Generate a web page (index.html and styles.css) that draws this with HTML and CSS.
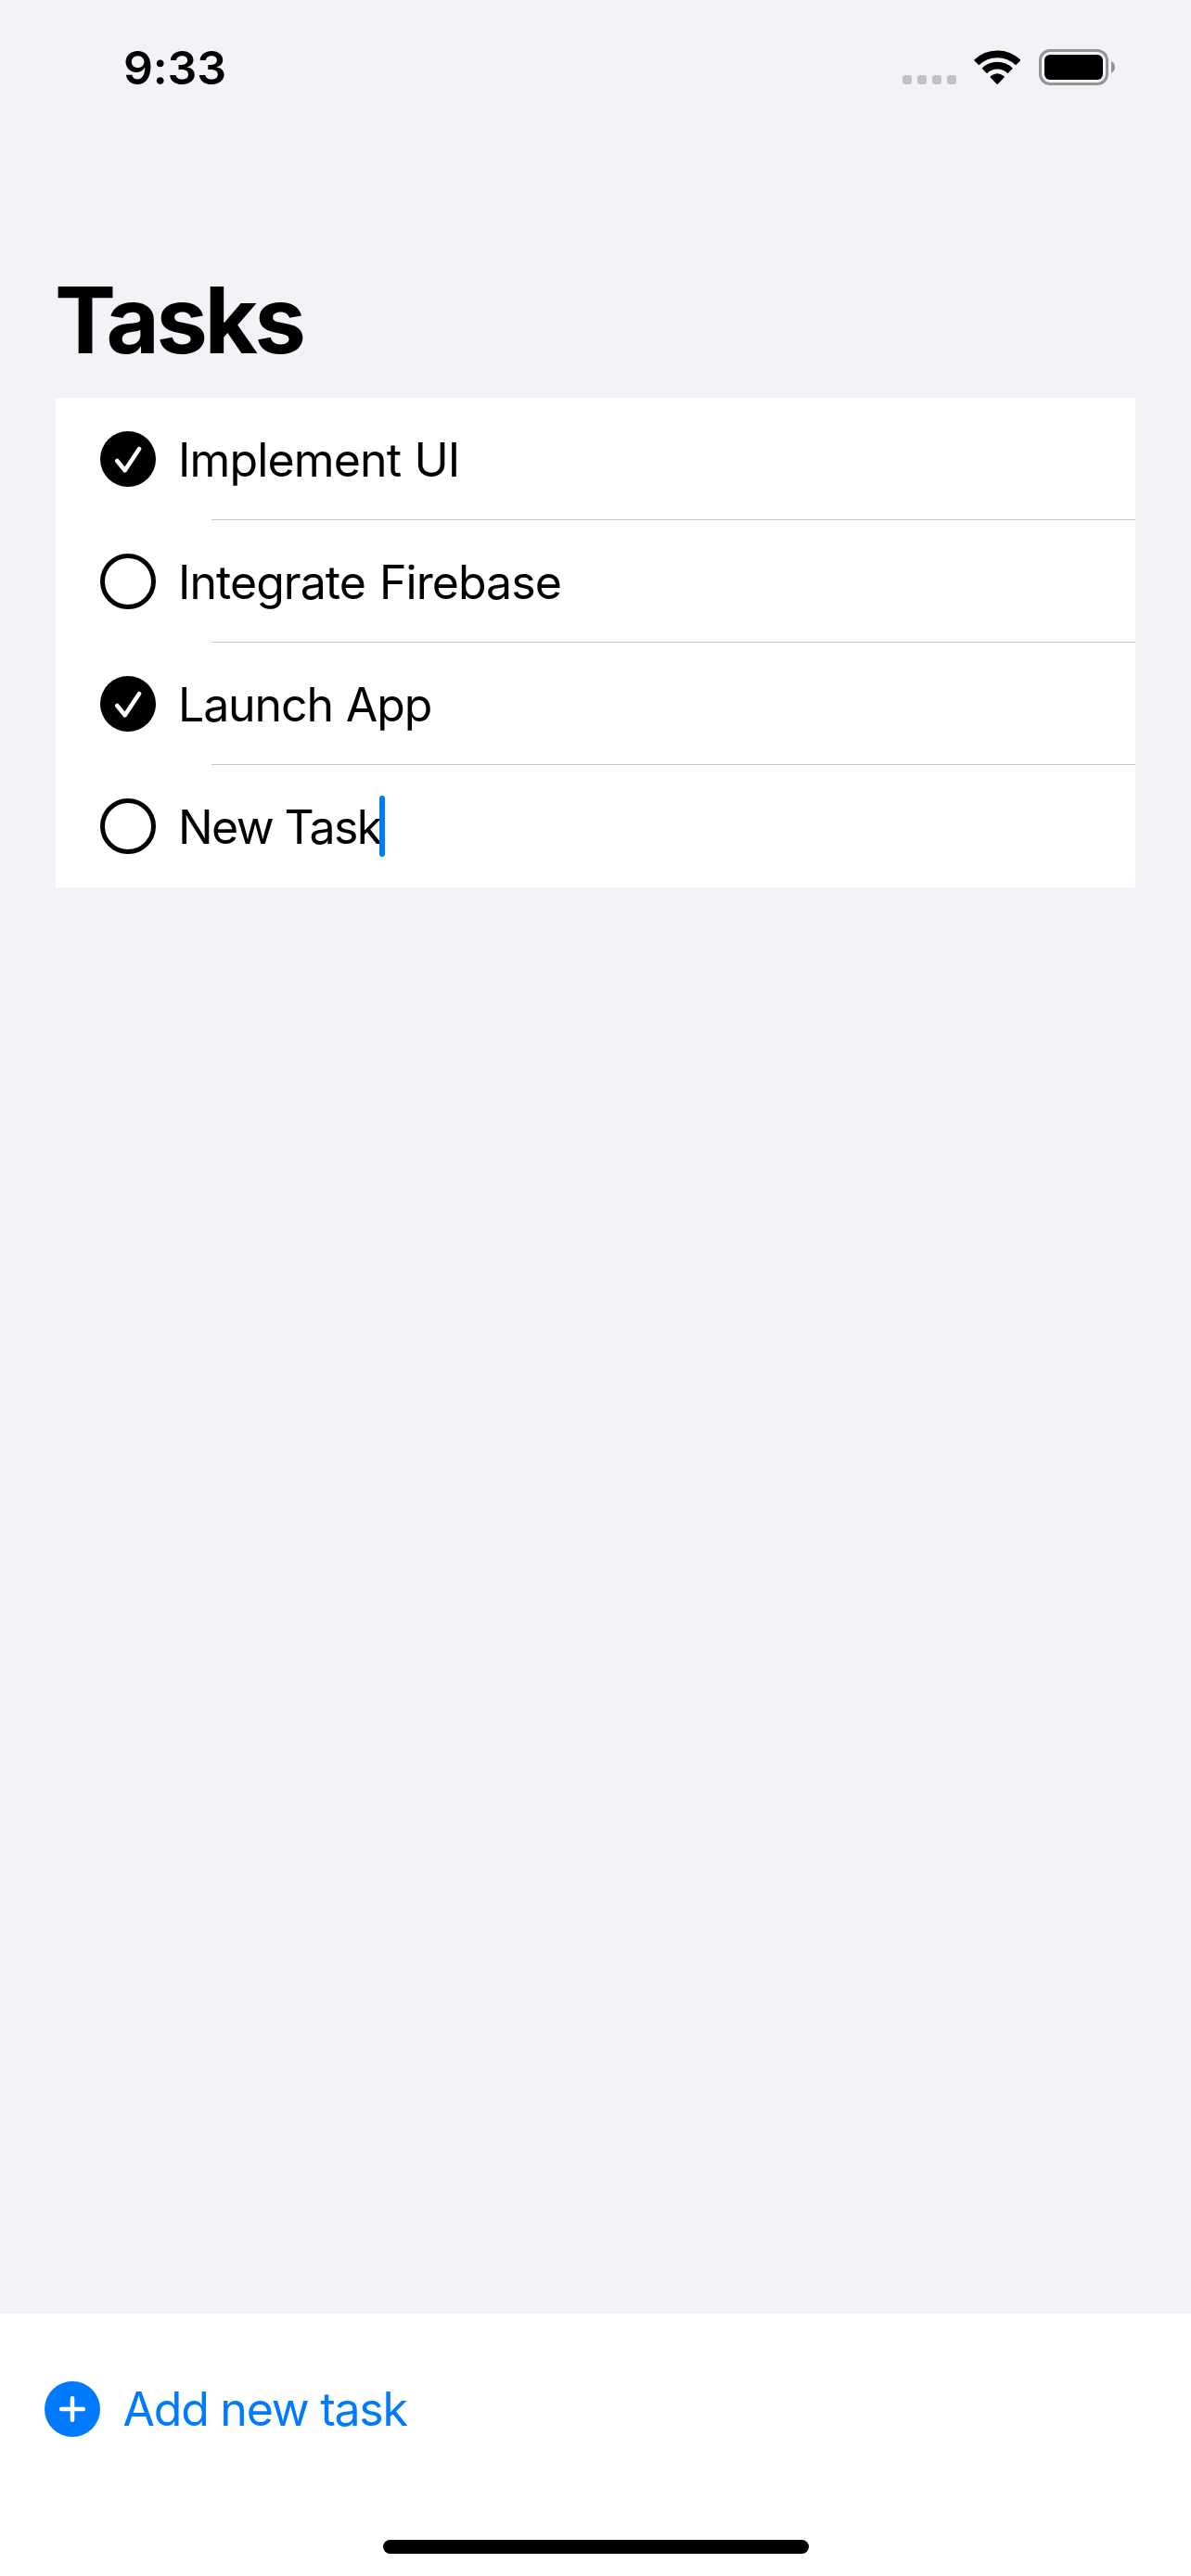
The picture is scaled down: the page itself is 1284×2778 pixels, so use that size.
FILE: index.html
```html
<!DOCTYPE html>
<html lang="en">
<head>
<meta charset="utf-8">
<title>Tasks</title>
<link rel="stylesheet" href="styles.css">
</head>
<body>
<div class="screen">
  <header class="status">
    <span class="time">9:33</span>
    <div class="indicators">
      <div class="signal"><i></i><i></i><i></i><i></i></div>
      <svg class="wifi" viewBox="0 0 50 37" width="50" height="37">
        <g fill="none" stroke="#000" stroke-width="7.7">
          <path d="M2.6 13.6A32.1 32.1 0 0 1 47.8 13.6"/>
          <path d="M11.3 22.4A19.7 19.7 0 0 1 39.1 22.4"/>
        </g>
        <path d="M18.2 30Q17 28.9 18.2 28.1Q25.2 22.6 32.2 28.1Q33.4 28.9 32.2 30L26 36.5Q25.2 37.3 24.4 36.5Z"/>
      </svg>
      <svg class="battery" viewBox="0 0 82 39" width="82" height="39">
        <rect x="1.5" y="1.5" width="72" height="36" rx="10.5" fill="none" stroke="#949396" stroke-width="3"/>
        <rect x="6" y="6" width="63" height="27" rx="6"/>
        <path d="M78 13.2Q82 15 82 19.5Q82 24 78 25.8Z" fill="#949396"/>
      </svg>
    </div>
  </header>

  <main class="content">
    <h1 class="title">Tasks</h1>
    <ul class="list">
      <li class="row">
        <svg class="icon" viewBox="0 0 60 60"><circle cx="30" cy="30" r="30"/><path class="tick" d="M18.3 32L26.7 42.2L42 19.2"/></svg>
        <span class="label implement">Implement UI</span>
      </li>
      <li class="row">
        <svg class="icon" viewBox="0 0 60 60"><circle class="ring" cx="30" cy="30" r="27.5"/></svg>
        <span class="label integrate">Integrate Firebase</span>
      </li>
      <li class="row">
        <svg class="icon" viewBox="0 0 60 60"><circle cx="30" cy="30" r="30"/><path class="tick" d="M18.3 32L26.7 42.2L42 19.2"/></svg>
        <span class="label launch">Launch App</span>
      </li>
      <li class="row">
        <svg class="icon" viewBox="0 0 60 60"><circle class="ring" cx="30" cy="30" r="27.5"/></svg>
        <span class="label new">New Task</span><span class="caret"></span>
      </li>
    </ul>
  </main>

  <footer class="toolbar">
    <div class="add">
      <svg class="icon" viewBox="0 0 60 60"><circle cx="30" cy="30" r="30" fill="#007aff"/><path class="plus" d="M30 18.2V41.8M18.2 30H41.8"/></svg>
      <span>Add new task</span>
    </div>
    <div class="home"></div>
  </footer>
</div>
</body>
</html>
```
FILE: styles.css
```css
* { box-sizing: border-box; }
body { margin: 0; background: #f2f2f7; color: #000; font: 400 50px/60px Inter, sans-serif; }
.screen { display: flex; flex-direction: column; width: 1284px; height: 2778px; }

.status { display: flex; justify-content: space-between; height: 141px; padding: 43px 82px 0 133px; }
.time { font-weight: 600; letter-spacing: -0.2px; }
.indicators { display: flex; align-items: flex-start; padding-top: 10px; }
.signal { display: flex; gap: 6px; margin: 28px 19px 0 0; }
.signal i { width: 10px; height: 10px; border-radius: 3px; background: #c3c2c7; }
.wifi { margin: 1px 20px 0 0; }

.content { flex: 1; padding: 144px 60px 0; }
.title { margin: 0 0 24px -1px; font-size: 99px; line-height: 120px; font-weight: 700; letter-spacing: -3.4px; }
.list { margin: 0; padding: 0; list-style: none; background: #fff; }
.row { display: flex; align-items: center; height: 132px; padding-left: 48px; }
.row:not(:last-child) { background: linear-gradient(#c6c6c8, #c6c6c8) right bottom / 996px 1px no-repeat; }
.icon { flex: none; width: 60px; height: 60px; }
.tick { fill: none; stroke: #fff; stroke-width: 4.6; stroke-linecap: round; stroke-linejoin: round; }
.ring { fill: none; stroke: #000; stroke-width: 5; }
.label { margin-left: 24px; padding-top: 2px; white-space: nowrap; }
.implement { letter-spacing: -0.86px; word-spacing: 1px; }
.integrate { letter-spacing: -0.96px; word-spacing: 2px; }
.launch { letter-spacing: -1.12px; word-spacing: 1px; }
.new { width: 217px; letter-spacing: -1.6px; }
.caret { z-index: 1; width: 6px; height: 66px; border-radius: 3px; background: #007aff; }

.toolbar { display: flex; flex-direction: column; justify-content: space-between; align-items: center; height: 283px; padding: 73px 0 24px; background: #fff; }
.add { display: flex; align-items: center; gap: 24.5px; align-self: flex-start; margin-left: 48px; color: #007aff; letter-spacing: -1.24px; }
.plus { fill: none; stroke: #fff; stroke-width: 4.6; stroke-linecap: round; }
.home { width: 459px; height: 15px; border-radius: 8px; background: #000; }
```
